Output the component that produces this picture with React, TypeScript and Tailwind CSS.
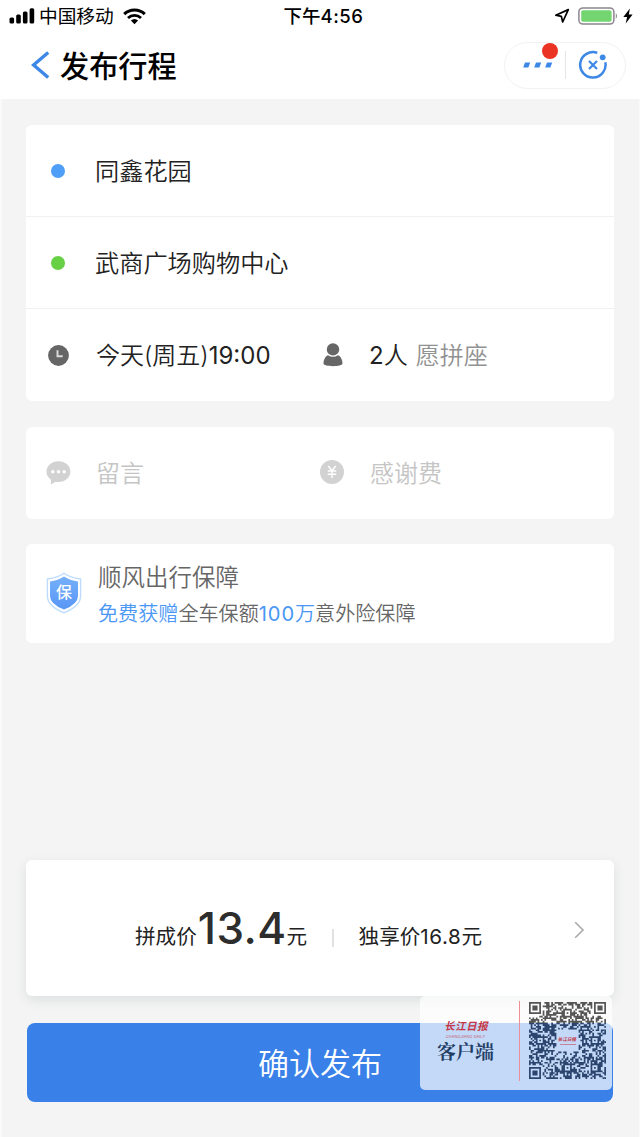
import type { ReactNode } from "react";

const FONT = "font-[Inter,'Noto_Sans_CJK_SC',sans-serif]";

function StatusBar() {
  return (
    <div className="flex h-8 items-center justify-between pl-[9px] pr-[7px] text-black">
      <div className="flex w-[200px] items-center">
        <svg width="26" height="16" viewBox="0 0 26 16" fill="currentColor">
          <rect x="0.5" y="9.5" width="4.6" height="6" rx="1.5" />
          <rect x="7.2" y="6.5" width="4.6" height="9" rx="1.5" />
          <rect x="13.9" y="3.5" width="4.6" height="12" rx="1.5" />
          <rect x="20.6" y="0.2" width="4.6" height="15.3" rx="1.5" />
        </svg>
        <span className="ml-1 pt-[2px] text-[18.7px] leading-8">中国移动</span>
        <svg className="ml-[9px]" width="23" height="17" viewBox="0 0 23 17" fill="none" stroke="currentColor">
          <path d="M1.2 6.1C6.8 .6 16.2 .6 21.8 6.1" strokeWidth="3" />
          <path d="M5 10C8.6 6.5 14.4 6.5 18 10" strokeWidth="2.8" />
          <path d="M7.9 12.6Q11.5 9.6 15.1 12.6L11.5 16.3Z" fill="currentColor" stroke="none" />
        </svg>
      </div>
      <span className="pl-[5px] text-[18.5px] font-medium leading-8">
        下午<span className="tracking-[0.5px]">4:56</span>
      </span>
      <div className="flex w-[200px] items-center justify-end">
        <svg width="16" height="16" viewBox="0 0 16 16" fill="none" stroke="currentColor" strokeWidth="1.7" strokeLinejoin="round">
          <path d="M14.3 1.6 1.8 7.2 7.3 8.3 8.7 14Z" />
        </svg>
        <svg className="ml-[8px]" width="41" height="18" viewBox="0 0 41 18" fill="none">
          <rect x="0.9" y="0.9" width="35" height="16.2" rx="4" stroke="#8b858d" strokeWidth="1.5" />
          <rect x="3.2" y="3.2" width="30.4" height="11.6" rx="1.8" fill="#73d56f" />
          <path d="M37.8 6Q40.2 9 37.8 12Z" fill="#8b858d" />
        </svg>
        <svg className="ml-[4px]" width="10" height="16" viewBox="0 0 10 16" fill="currentColor">
          <path d="M6.9.4.3 9.1H4.1L2.7 15.6 9.6 6.4H5.8Z" />
        </svg>
      </div>
    </div>
  );
}

function NavBar() {
  return (
    <div className="flex h-[67px] items-center pl-[31px] pr-[14px]">
      <svg className="mb-[2px]" width="19" height="28" viewBox="0 0 19 28" fill="none" stroke="#3d88e7" strokeWidth="3.4">
        <path d="M17.2 1.5 2.6 14 17.2 26.5" />
      </svg>
      <h1 className="ml-[10px] mt-[2px] text-[29.2px] font-medium leading-10 text-black">发布行程</h1>
      <div className="relative mb-[1px] ml-auto flex h-[47px] w-[122px] items-center rounded-full border border-[#f2f2f2]">
        <svg className="ml-[18px]" width="30" height="6" viewBox="0 0 30 6" fill="#3d88e7">
          <path d="M2 .5H7.2L5.4 5.5H.2Z M13 .5H18.2L16.4 5.5H11.2Z M24 .5H29.2L27.4 5.5H22.2Z" />
        </svg>
        <i className="absolute left-[36.5px] top-[0.5px] size-4 rounded-full bg-[#ea3323]" />
        <span className="ml-[12px] h-7 w-px bg-[#e5e5e5]" />
        <svg className="ml-[12px]" width="30" height="30" viewBox="0 0 30 30" fill="none" stroke="#3d88e7">
          <path d="M19.3 2.9A12.7 12.7 0 1 0 27.3 12.2" strokeWidth="2.5" />
          <path d="M11 11 19 19M19 11 11 19" strokeWidth="2.2" />
          <circle cx="24.7" cy="7.3" r="2.9" fill="#3d88e7" stroke="none" />
        </svg>
      </div>
    </div>
  );
}

function Card({ className, children }: { className: string; children: ReactNode }) {
  return <section className={`mx-[26px] rounded-[6px] bg-white ${className}`}>{children}</section>;
}

function PlaceRow({ dot, name }: { dot: string; name: string }) {
  return (
    <div className="flex h-[92px] items-center border-b border-[#f1f1f1] pl-[25px]">
      <i className={`size-[14px] rounded-full ${dot}`} />
      <span className="ml-[30px] pt-[3px] text-[24.2px] font-[350]">{name}</span>
    </div>
  );
}

function TripCard() {
  return (
    <Card className="mt-[26px] h-[276px]">
      <PlaceRow dot="bg-[#4f9ff8]" name="同鑫花园" />
      <PlaceRow dot="bg-[#67d044]" name="武商广场购物中心" />
      <div className="flex h-[92px] items-center pl-[22px]">
        <div className="flex w-[274px] items-center">
          <svg width="21" height="21" viewBox="0 0 21 21">
            <circle cx="10.5" cy="10.5" r="10.4" fill="#666" />
            <path d="M9.5 5.3V11.3H14.7" fill="none" stroke="#ddd" strokeWidth="1.9" />
          </svg>
          <span className="ml-[27px] pt-[2px] text-[24px] font-[350]">
            今天(周五)<span className="font-normal">19:00</span>
          </span>
        </div>
        <svg className="ml-[1px]" width="20" height="24" viewBox="0 0 20 24" fill="#666">
          <circle cx="10" cy="6.4" r="6.2" />
          <path d="M5 12.3Q10 15.3 15 12.3C18 13.5 19.5 17.4 19.5 20.5C19.5 24 .5 24 .5 20.5C.5 17.4 2 13.5 5 12.3Z" />
        </svg>
        <span className="ml-[26px] pt-[2px] text-[24px] font-[350]">
          <span className="font-normal">2</span>人
        </span>
        <span className="ml-[8px] pt-[2px] text-[24px] font-[350] text-[#929292]">愿拼座</span>
      </div>
    </Card>
  );
}

function ExtrasCard() {
  return (
    <Card className="mt-[26px] flex h-[92px] items-center pl-5 text-[24px] font-[350] text-[#c5c5c5]">
      <div className="flex w-[274px] items-center">
        <svg width="25" height="24" viewBox="0 0 25 24">
          <path d="M12.5.3C19.2.3 24.4 4.9 24.4 10.8S19.2 21 12.5 21Q11 21 9.6 20.7L4.8 23.6 5 18.8C2.2 16.8.5 14 .5 10.8.5 4.9 5.8.3 12.5.3Z" fill="#d2d2d2" />
          <circle cx="6.8" cy="10.8" r="1.7" fill="#fff" />
          <circle cx="12.5" cy="10.8" r="1.7" fill="#fff" />
          <circle cx="18.2" cy="10.8" r="1.7" fill="#fff" />
        </svg>
        <span className="ml-[25px] pt-[2px]">留言</span>
      </div>
      <svg className="mb-[2px]" width="24" height="24" viewBox="0 0 24 24">
        <circle cx="12" cy="12" r="12" fill="#d2d2d2" />
        <path d="M8.3 6 12 10.8 15.7 6M12 10.8V18M7.8 11H16.2M7.8 14.3H16.2" fill="none" stroke="#fff" strokeWidth="1.4" />
      </svg>
      <span className="ml-[26px] pt-[2px]">感谢费</span>
    </Card>
  );
}

function InsuranceCard() {
  return (
    <Card className="mt-[25px] flex h-[99px] items-center pl-5">
      <svg className="mb-px shrink-0" width="36" height="42" viewBox="0 0 36 42">
        <defs>
          <linearGradient id="shield" x1="0" y1="0" x2="0" y2="1">
            <stop offset="0" stopColor="#75b0fa" />
            <stop offset="1" stopColor="#5996f6" />
          </linearGradient>
        </defs>
        <path d="M18 1.2Q24 5.6 34.6 7V24Q34.6 34 18 40.8Q1.4 34 1.4 24V7Q12 5.6 18 1.2Z" fill="#fff" stroke="#bfdcff" strokeWidth="1.4" />
        <path d="M18 4.6Q24 8.5 32 9.6V24Q32 32 18 37.6Q4 32 4 24V9.6Q12 8.5 18 4.6Z" fill="url(#shield)" />
        <text x="18" y="26" textAnchor="middle" fontSize="16" fontWeight="500" fill="#fff">保</text>
      </svg>
      <div className="ml-4 pt-[5px] text-[#666]">
        <p className="text-[23.5px] font-[350] leading-9">顺风出行保障</p>
        <p className="text-[20.1px] font-[350] leading-9">
          <span className="text-[#4a97f5]">
            免费获赠
          </span>
          全车保额
          <span className="text-[#4a97f5]">
            <span className="font-normal tracking-[0.9px]">100</span>万
          </span>
          意外险保障
        </p>
      </div>
    </Card>
  );
}

function PriceCard() {
  return (
    <Card className="mt-[217px] flex h-[136px] items-center pl-[109px] pr-[29px] shadow-[0_4px_12px_rgba(40,60,70,0.11)]">
      <div className="flex items-baseline text-[20.6px] text-[#222]">
        <span>拼成价</span>
        <span className="ml-px text-[44px] font-medium tracking-[0.4px] text-[#2d2d2d]">13.4</span>
        <span>元</span>
        <i className="mx-[25px] h-[18px] w-[1.5px] translate-y-[3px] bg-[#e1e1e1]" />
        <span>
          独享价<span className="tracking-[0.6px]">16.8</span>元
        </span>
      </div>
      <svg className="ml-auto mt-1" width="11" height="18" viewBox="0 0 11 18" fill="none" stroke="#aaa" strokeWidth="1.6">
        <path d="M1.2 1.2 9 9 1.2 16.8" />
      </svg>
    </Card>
  );
}

const SIZE = 45;

// finder and alignment squares: [column, row, width]
const EYES = [
  [0, 0, 7],
  [38, 0, 7],
  [0, 38, 7],
  [4, 20, 5],
  [36, 20, 5],
  [20, 36, 5],
  [36, 36, 5],
  [20, 4, 5],
];

function qrPath() {
  let seed = 20117;
  let d = "";
  for (let y = 0; y < SIZE; y++) {
    for (let x = 0; x < SIZE; x++) {
      seed = (seed * 48271) % 2147483647;
      let on = seed / 2147483647 < 0.54;
      for (const [ex, ey, w] of EYES) {
        const pad = w === 7 ? 1 : 0;
        if (x < ex - pad || x >= ex + w + pad || y < ey - pad || y >= ey + w + pad) continue;
        const r = Math.max(Math.abs(x - ex - (w - 1) / 2), Math.abs(y - ey - (w - 1) / 2));
        on = w === 7 ? r === 3 || r <= 1 : r === 2 || r === 0;
      }
      if (x > 15 && x < 29 && y > 15 && y < 29) on = false;
      if (on) d += `M${x} ${y}h1v1h-1z`;
    }
  }
  return d;
}

function Watermark() {
  return (
    <div className="absolute -top-[27px] right-[1px] flex h-[94px] w-[192px] rounded-[5px] bg-white/70">
      <div className="flex w-[99px] flex-col items-center pr-[8px] pt-[23px]">
        <span className="-skew-x-12 whitespace-nowrap pl-[2px] text-[10.5px] font-bold leading-[16px] tracking-[0.5px] text-[#c43746]">
          长江日报
        </span>
        <span className="whitespace-nowrap text-[4px] leading-[4px] text-[#c5606f]">CHANGJIANG DAILY</span>
        <span className="font-['Noto_Serif_CJK_SC','Noto_Sans_CJK_SC',serif] text-[19px] font-bold leading-6 text-[#233e66]">
          客户端
        </span>
      </div>
      <span className="mt-[5px] h-20 w-px bg-[#ee8f96]" />
      <div className="relative ml-[9px] mt-[6px] size-[77px]">
        <svg width="77" height="77" viewBox="0 0 45 45">
          <defs>
            <linearGradient id="qr" x1="0" y1="0" x2="0" y2="45" gradientUnits="userSpaceOnUse">
              <stop offset="0.275" stopColor="#555" />
              <stop offset="0.275" stopColor="#2b456e" />
            </linearGradient>
          </defs>
          <path d={qrPath()} fill="url(#qr)" />
        </svg>
        <div className="absolute inset-0 flex flex-col items-center justify-center">
          <span className="-skew-x-12 text-[4.6px] font-bold leading-[6px] text-[#c43746]">长江日报</span>
          <i className="mt-[1px] h-px w-4 bg-[#c98397]" />
        </div>
      </div>
    </div>
  );
}

export default function App() {
  return (
    <main
      className={`h-[1137px] w-[640px] overflow-hidden bg-[#f4f4f4] text-[#222] shadow-[inset_2px_0_#fafafa,inset_-1px_0_#fafafa] ${FONT}`}
    >
      <header className="bg-white">
        <StatusBar />
        <NavBar />
      </header>
      <TripCard />
      <ExtrasCard />
      <InsuranceCard />
      <PriceCard />
      <div className="relative mx-[27px] mt-[27px]">
        <button className="h-[79px] w-full rounded-[8px] bg-[#3980e8] pt-[3px] text-[31px] font-[350] text-white">确认发布</button>
        <Watermark />
      </div>
    </main>
  );
}
